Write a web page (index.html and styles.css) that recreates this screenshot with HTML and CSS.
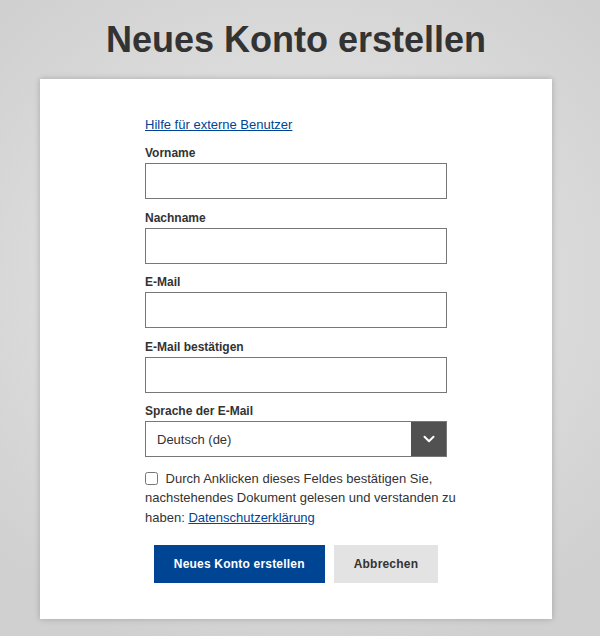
FILE: index.html
```html
<!DOCTYPE html>
<html lang="de">
<head>
<meta charset="utf-8">
<title>Neues Konto erstellen</title>
<link rel="stylesheet" href="styles.css">
</head>
<body>
<div class="page">
  <h1 class="title">Neues Konto erstellen</h1>
  <div class="card">
    <form class="form">
      <a class="help-link" href="#">Hilfe für externe Benutzer</a>
      <div class="field">
        <label class="label" for="vorname">Vorname</label>
        <input class="input" id="vorname" type="text">
      </div>
      <div class="field">
        <label class="label" for="nachname">Nachname</label>
        <input class="input" id="nachname" type="text">
      </div>
      <div class="field">
        <label class="label" for="email">E-Mail</label>
        <input class="input" id="email" type="text">
      </div>
      <div class="field">
        <label class="label" for="email2">E-Mail bestätigen</label>
        <input class="input" id="email2" type="text">
      </div>
      <div class="field">
        <label class="label" for="lang">Sprache der E-Mail</label>
        <div class="select">
          <span class="select-value">Deutsch (de)</span>
          <span class="select-btn">
            <svg width="14" height="14" viewBox="0 0 14 14"><path d="M2.5 4.8 L7 9.2 L11.5 4.8" fill="none" stroke="#fff" stroke-width="2" stroke-linecap="round" stroke-linejoin="round"/></svg>
          </span>
        </div>
      </div>
      <p class="consent"><input class="check" type="checkbox"> Durch Anklicken dieses Feldes bestätigen Sie, nachstehendes Dokument gelesen und verstanden zu haben: <a class="consent-link" href="#">Datenschutzerklärung</a></p>
      <div class="actions">
        <button class="btn btn-primary" type="button">Neues Konto erstellen</button>
        <button class="btn btn-secondary" type="button">Abbrechen</button>
      </div>
    </form>
  </div>
</div>
</body>
</html>
```

FILE: styles.css
```css
* { box-sizing: border-box; }
html, body { margin: 0; padding: 0; }
body {
  min-height: 636px;
  background: radial-gradient(ellipse 70% 60% at 50% 45%, #e7e7e7 0%, #dcdcdc 55%, #d0d0d0 100%);
  font-family: "Liberation Sans", Arial, sans-serif;
  color: #333;
}
.page {
  width: 592px;
  display: flex;
  flex-direction: column;
  align-items: center;
}
.title {
  margin: 20px 0 19px;
  font-size: 36px;
  line-height: 40px;
  font-weight: bold;
  color: #333;
}
.card {
  width: 512px;
  background: #fff;
  box-shadow: 0 0 6px rgba(0,0,0,0.22);
  padding: 38px 105px 36px;
}
.form { display: flex; flex-direction: column; }
.help-link {
  font-size: 13px;
  line-height: 16px;
  color: #004494;
  text-decoration: underline;
  align-self: flex-start;
  margin-bottom: 11px;
}
.field {
  display: flex;
  flex-direction: column;
  margin-bottom: 9.5px;
}
.label {
  font-size: 12px;
  line-height: 18px;
  font-weight: bold;
  color: #333;
  margin-bottom: 1px;
}
.input {
  height: 36px;
  width: 100%;
  border: 1px solid #777;
  border-radius: 0;
  margin: 0;
  padding: 0 10px;
  font: 13px "Liberation Sans", Arial, sans-serif;
  background: #fff;
}
.select {
  display: flex;
  height: 36px;
  border: 1px solid #777;
  background: #fff;
}
.select-value {
  flex: 1;
  display: flex;
  align-items: center;
  padding-left: 11px;
  font-size: 13px;
  color: #333;
}
.select-btn {
  width: 35px;
  background: #515151;
  display: flex;
  align-items: center;
  justify-content: center;
}
.consent {
  margin: 2px -12px 0 0;
  font-size: 13px;
  line-height: 19.5px;
  color: #333;
}
.check {
  width: 13px;
  height: 13px;
  margin: 0 4px 0 0;
  vertical-align: -2px;
}
.consent-link { color: #004494; text-decoration: underline; }
.actions {
  display: flex;
  justify-content: center;
  gap: 9px;
  margin-top: 18px;
}
.btn {
  height: 38px;
  border: 0;
  border-radius: 0;
  padding: 0 20px;
  font: bold 12px "Liberation Sans", Arial, sans-serif;
  letter-spacing: 0.2px;
  cursor: pointer;
}
.btn-primary { background: #004494; color: #fff; }
.btn-secondary { background: #e3e3e3; color: #333; }
```
